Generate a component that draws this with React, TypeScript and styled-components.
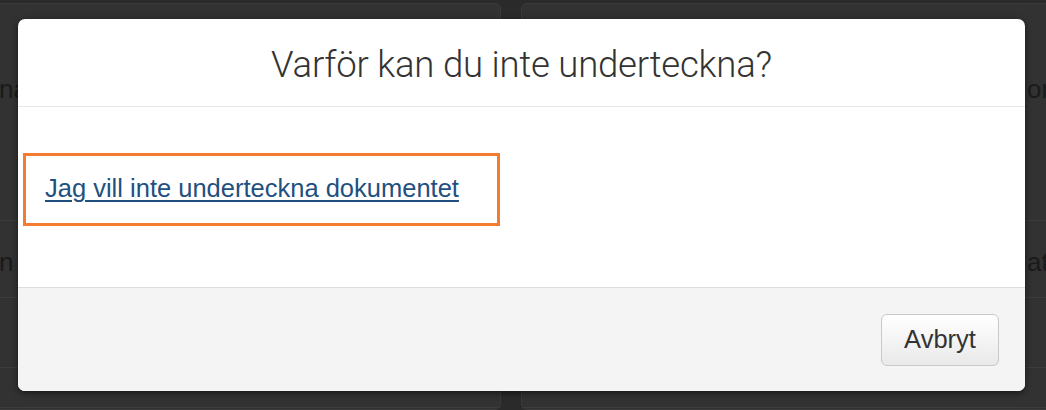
import React from "react";
import styled, { createGlobalStyle } from "styled-components";

const Global = createGlobalStyle`
  html, body { margin: 0; padding: 0; }
  body {
    width: 1046px;
    height: 410px;
    overflow: hidden;
    background: #2a2a2a;
    font-family: "Liberation Sans", Arial, sans-serif;
  }
`;

const Page = styled.div`
  position: relative;
  width: 1046px;
  height: 410px;
  overflow: hidden;
  background: #2a2a2a;
  display: grid;
  grid-template-columns: 501px 535px;
  column-gap: 20px;
  padding-top: 3px;
  box-sizing: border-box;
`;

const Card = styled.div<{ $side: "left" | "right" }>`
  background: #323232;
  border: 1px solid #3a3a3a;
  border-radius: 6px;
  display: flex;
  flex-direction: column;
  margin-left: ${(p) => (p.$side === "left" ? "-10px" : "0")};
`;

const Row = styled.div<{ $h: number; $indent: number; $top: number }>`
  height: ${(p) => p.$h}px;
  border-bottom: 1px solid #3c3c3c;
  display: flex;
  align-items: flex-start;
  color: #1a1a1a;
  font-size: 26px;
  line-height: 30px;
  overflow: hidden;
  padding-left: ${(p) => p.$indent}px;
  padding-top: ${(p) => p.$top}px;
  box-sizing: border-box;
  white-space: nowrap;
`;

const Overlay = styled.div`
  position: absolute;
  inset: 0;
  padding: 19px 21px 19px 18px;
  box-sizing: border-box;
  display: flex;
`;

const Modal = styled.div`
  flex: 1;
  background: #fff;
  border-radius: 7px;
  box-shadow: 0 2px 6px rgba(0, 0, 0, 0.55);
  display: flex;
  flex-direction: column;
  overflow: hidden;
`;

const Header = styled.div`
  height: 88px;
  border-bottom: 1px solid #e8e8e8;
  display: flex;
  align-items: center;
  justify-content: center;
  padding-top: 3px;
  box-sizing: border-box;
`;

const Title = styled.h3`
  margin: 0;
  font-family: Roboto, "Liberation Sans", sans-serif;
  font-weight: 300;
  font-size: 36.5px;
  color: #333;
  letter-spacing: -0.2px;
`;

const Body = styled.div`
  height: 181px;
  padding: 46px 0 0 5px;
  box-sizing: border-box;
  border-bottom: 1px solid #dedede;
`;

const Choice = styled.div`
  width: 477px;
  height: 73px;
  box-sizing: border-box;
  border: 3px solid #f47b30;
  display: flex;
  align-items: center;
  padding: 0 0 2px 19px;
`;

const Link = styled.a`
  font-family: "Liberation Sans", Arial, sans-serif;
  font-size: 25.5px;
  color: #1f5080;
  text-decoration: underline;
  text-underline-offset: 3px;
  text-decoration-thickness: 2px;
  cursor: pointer;
`;

const Footer = styled.div`
  flex: 1;
  background: #f4f4f4;
  display: flex;
  align-items: center;
  justify-content: flex-end;
  padding-right: 26px;
`;

const Button = styled.button`
  width: 118px;
  height: 52px;
  border: 1px solid #c9c9c9;
  border-radius: 6px;
  background: linear-gradient(#ffffff, #e9e9e9);
  font-family: "Liberation Sans", Arial, sans-serif;
  font-size: 25.5px;
  color: #333;
  padding: 0;
  box-shadow: inset 0 1px 0 rgba(255, 255, 255, 0.8);
`;

export default function App() {
  return (
    <>
      <Global />
      <Page>
        <Card $side="left">
          <Row $h={217} $indent={8} $top={70}>na</Row>
          <Row $h={77} $indent={8} $top={26}>n</Row>
          <Row $h={70} $indent={8} $top={20} />
          <Row $h={40} $indent={8} $top={0} />
        </Card>
        <Card $side="right">
          <Row $h={217} $indent={505} $top={70}>or</Row>
          <Row $h={77} $indent={505} $top={26}>at</Row>
          <Row $h={70} $indent={505} $top={20} />
          <Row $h={40} $indent={505} $top={0} />
        </Card>
        <Overlay>
          <Modal>
            <Header>
              <Title>Varför kan du inte underteckna?</Title>
            </Header>
            <Body>
              <Choice>
                <Link>Jag vill inte underteckna dokumentet</Link>
              </Choice>
            </Body>
            <Footer>
              <Button>Avbryt</Button>
            </Footer>
          </Modal>
        </Overlay>
      </Page>
    </>
  );
}
